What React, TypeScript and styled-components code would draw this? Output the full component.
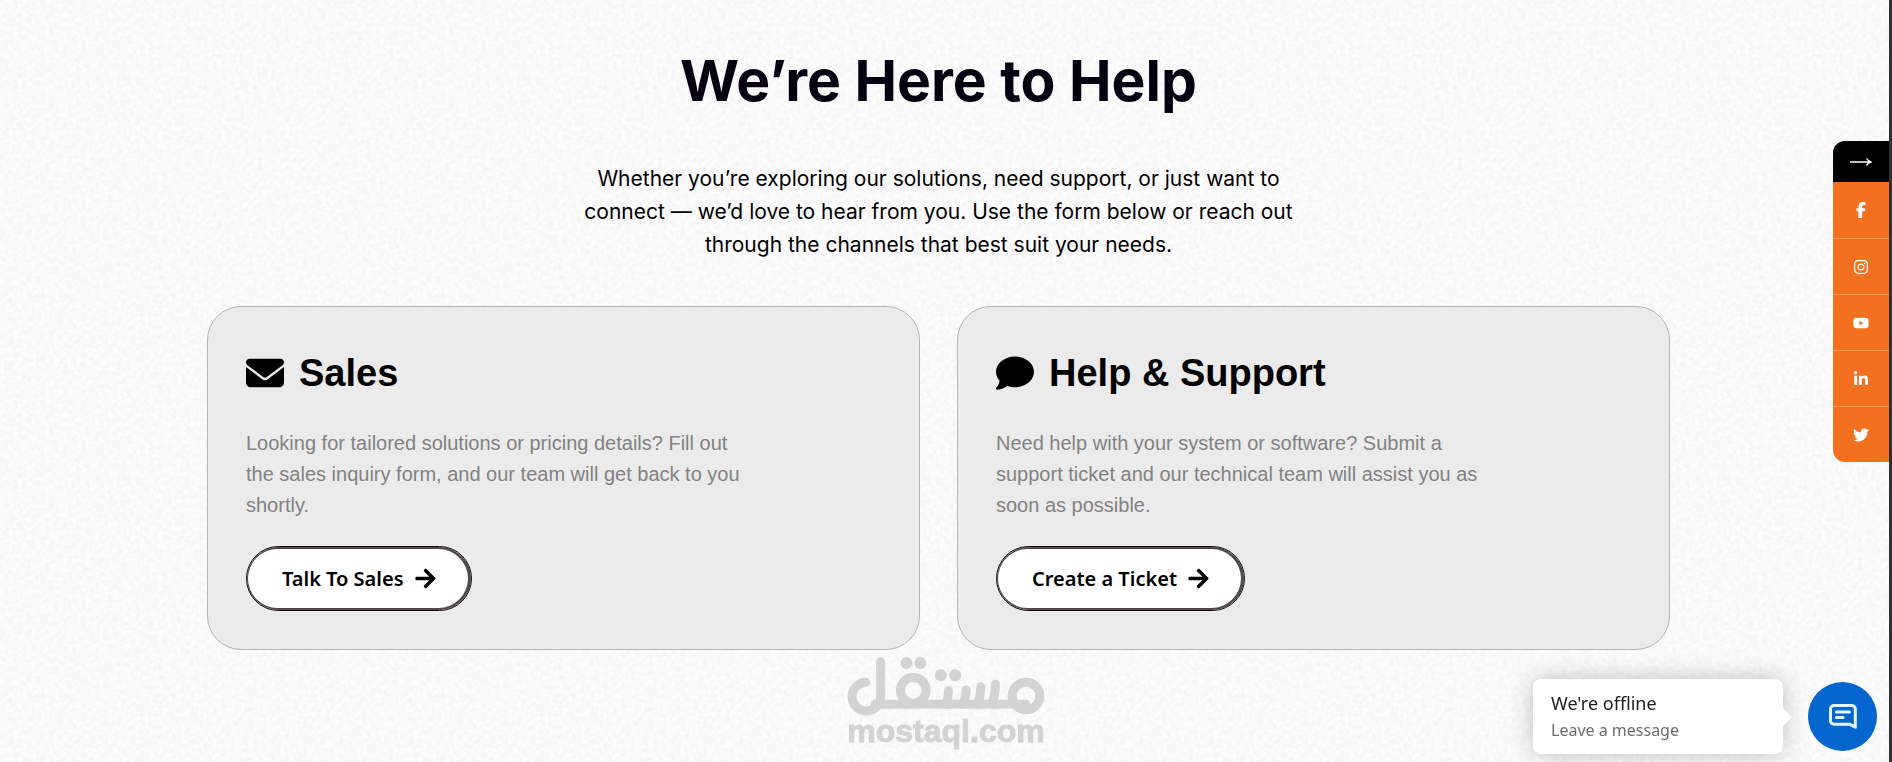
import React from 'react';
import styled, { createGlobalStyle } from 'styled-components';
import { FaArrowRight } from 'react-icons/fa';
import {
  FaComment,
  FaEnvelope,
  FaFacebookF,
  FaInstagram,
  FaLinkedinIn,
  FaTwitter,
  FaYoutube,
} from 'react-icons/fa6';

const paper = `url("data:image/svg+xml,${encodeURIComponent(
  `<svg xmlns="http://www.w3.org/2000/svg" width="400" height="400"><filter id="n"><feTurbulence type="fractalNoise" baseFrequency="0.22" numOctaves="3" seed="4" stitchTiles="stitch"/><feColorMatrix values="0 0 0 0 0  0 0 0 0 0  0 0 0 0 0  0.06 0 0 0 -0.014"/></filter><rect width="400" height="400" filter="url(#n)"/></svg>`
)}")`;

const GlobalStyle = createGlobalStyle`
  *, *::before, *::after { box-sizing: border-box; }
  body { margin: 0; background: #fdfdfd; }
  h1, h2, p { margin: 0; }
  svg { display: block; }
`;

const Page = styled.div`
  min-height: 100vh;
  border-right: 3px solid #303030;
  background: #fdfdfd ${paper};
  color: #000;
`;

const Section = styled.main`
  display: flex;
  flex-direction: column;
  align-items: center;
  padding: 45px 219px 113px 207px;

  @media (max-width: 1100px) {
    padding: 45px 80px 113px 24px;
  }
`;

const Title = styled.h1`
  font: 700 57px/72px Inter, sans-serif;
  color: #05000f;
  text-align: center;
`;

const Intro = styled.p`
  max-width: 730px;
  margin: 45px 0;
  font: 400 21px/33px Inter, sans-serif;
  text-align: center;
`;

const Cards = styled.div`
  display: grid;
  grid-template-columns: repeat(auto-fit, minmax(320px, 1fr));
  gap: 37px;
  width: 100%;
`;

const Card = styled.section`
  display: flex;
  flex-direction: column;
  align-items: flex-start;
  padding: 38px;
  border: 1px solid #b5b5b5;
  border-radius: 34px;
  background: #ebebeb;
`;

const CardHeading = styled.div`
  display: flex;
  align-items: center;
  gap: 15px;
  margin-bottom: 27px;
`;

const CardTitle = styled.h2`
  font: 700 38px/56px 'Liberation Sans', Arial, sans-serif;
`;

const CardText = styled.p`
  max-width: 500px;
  margin-bottom: 25px;
  font: 400 20px/31px 'Liberation Sans', Arial, sans-serif;
  color: #828282;
`;

const PillButton = styled.button`
  display: flex;
  align-items: center;
  gap: 10px;
  height: 65px;
  padding: 0 34px 0 35px;
  border: 1px solid #0c0808;
  border-radius: 33px;
  background: #fff;
  box-shadow: inset -1px 0 0 2px #514a4b;
  font: 600 20px/28px 'Noto Sans', sans-serif;
  color: #000;
  cursor: pointer;
`;

const SocialBar = styled.nav`
  position: fixed;
  top: 141px;
  right: 3px;
  width: 56px;
  overflow: hidden;
  border-radius: 12px 0 0 12px;
  background: #f37021;
`;

const Collapse = styled.button`
  display: flex;
  align-items: center;
  justify-content: center;
  width: 100%;
  height: 41px;
  padding: 0;
  border: 0;
  background: #000;
  color: #fff;
  cursor: pointer;
`;

const SocialLink = styled.a`
  display: flex;
  align-items: center;
  justify-content: center;
  height: 56px;
  color: #fff;

  & + & {
    border-top: 1px solid #f69a63;
  }
`;

const Chat = styled.aside`
  position: fixed;
  right: 15px;
  bottom: 8px;
  display: flex;
  align-items: center;
  gap: 25px;
`;

const ChatBubble = styled.div`
  position: relative;
  width: 250px;
  height: 75px;
  padding: 12px 18px;
  border-radius: 8px;
  background: #fff;
  box-shadow: 0 0 24px rgba(0, 0, 0, 0.24);

  &::after {
    content: '';
    position: absolute;
    top: 50%;
    left: 100%;
    border: 9px solid transparent;
    border-right: 0;
    border-left-color: #fff;
    transform: translateY(-50%);
  }
`;

const ChatStatus = styled.p`
  font: 400 18px/24px 'Noto Sans', sans-serif;
  color: #1c1c1c;
`;

const ChatHint = styled.p`
  margin-top: 3px;
  font: 400 16px/24px 'Noto Sans', sans-serif;
  color: #6e6e6e;
`;

const ChatButton = styled.button`
  display: flex;
  align-items: center;
  justify-content: center;
  width: 69px;
  height: 69px;
  padding: 0;
  border: 0;
  border-radius: 50%;
  background: #0566d0;
  color: #fff;
  cursor: pointer;
`;

const Brand = styled.div`
  position: fixed;
  bottom: 16px;
  left: 50%;
  display: flex;
  flex-direction: column;
  align-items: center;
  transform: translateX(-50%);
  color: #d3d3d3;
  font: 700 32px/30px 'Liberation Sans', Arial, sans-serif;
  -webkit-text-stroke: 1px #d3d3d3;
  pointer-events: none;
`;

const cards = [
  {
    icon: FaEnvelope,
    title: 'Sales',
    text: 'Looking for tailored solutions or pricing details? Fill out the sales inquiry form, and our team will get back to you shortly.',
    action: 'Talk To Sales',
  },
  {
    icon: FaComment,
    title: 'Help & Support',
    text: 'Need help with your system or software? Submit a support ticket and our technical team will assist you as soon as possible.',
    action: 'Create a Ticket',
  },
];

const socials = [
  { name: 'Facebook', icon: FaFacebookF },
  { name: 'Instagram', icon: FaInstagram },
  { name: 'YouTube', icon: FaYoutube },
  { name: 'LinkedIn', icon: FaLinkedinIn },
  { name: 'Twitter', icon: FaTwitter },
];

const LongArrow = () => (
  <svg width="22" height="8" viewBox="0 0 22 8" fill="none" stroke="currentColor" strokeWidth="1.3" aria-hidden="true">
    <path d="M0 4H21M16.500 .5C17.500 2.500 19 3.600 21.500 4C19 4.400 17.500 5.500 16.500 7.500" />
  </svg>
);

const MessageIcon = () => (
  <svg width="28" height="25" viewBox="0 0 28 25" fill="none" stroke="#e4f6ff" strokeWidth="3" strokeLinecap="round" strokeLinejoin="round" aria-hidden="true">
    <path d="M5 1.500H23A3.500 3.500 0 0 1 26.300 5V23.200L20.500 20.200H5A3.500 3.500 0 0 1 1.500 16.700V5A3.500 3.500 0 0 1 5 1.500Z" />
    <path d="M7.500 8H20.500M7.500 13.500H14" />
  </svg>
);

const BrandMark = () => (
  <svg width="198" height="60" viewBox="80 45 595 180" fill="none" stroke="currentColor" strokeWidth="27" strokeLinecap="round" aria-hidden="true">
    <circle cx="618" cy="165" r="41.500" />
    <path d="M618 190H165" />
    <path d="M526 130Q526 165 515 190M482 137Q482 165 472 190M438 147Q438 170 428 190M385 149Q385 170 377 190" />
    <circle cx="279" cy="148" r="38.500" />
    <path d="M181 62V162A43 43 0 1 1 136 124" />
    <g fill="currentColor" stroke="none">
      <circle cx="362" cy="103" r="18" />
      <circle cx="405" cy="103" r="18" />
      <circle cx="259" cy="66" r="18" />
      <circle cx="300" cy="66" r="18" />
    </g>
  </svg>
);

export default function App() {
  return (
    <Page>
      <GlobalStyle />
      <Section>
        <Title>We’re Here to Help</Title>
        <Intro>
          Whether you’re exploring our solutions, need support, or just want to connect — we’d love
          to hear from you. Use the form below or reach out through the channels that best suit your
          needs.
        </Intro>
        <Cards>
          {cards.map(({ icon: Icon, title, text, action }) => (
            <Card key={title}>
              <CardHeading>
                <Icon size={38} aria-hidden="true" />
                <CardTitle>{title}</CardTitle>
              </CardHeading>
              <CardText>{text}</CardText>
              <PillButton type="button">
                {action}
                <FaArrowRight size={23} aria-hidden="true" />
              </PillButton>
            </Card>
          ))}
        </Cards>
      </Section>

      <SocialBar aria-label="Social media">
        <Collapse type="button" aria-label="Hide social links">
          <LongArrow />
        </Collapse>
        {socials.map(({ name, icon: Icon }) => (
          <SocialLink key={name} href="#" aria-label={name}>
            <Icon size={16} />
          </SocialLink>
        ))}
      </SocialBar>

      <Brand>
        <BrandMark />
        mostaql.com
      </Brand>

      <Chat>
        <ChatBubble>
          <ChatStatus>We're offline</ChatStatus>
          <ChatHint>Leave a message</ChatHint>
        </ChatBubble>
        <ChatButton type="button" aria-label="Open chat">
          <MessageIcon />
        </ChatButton>
      </Chat>
    </Page>
  );
}
